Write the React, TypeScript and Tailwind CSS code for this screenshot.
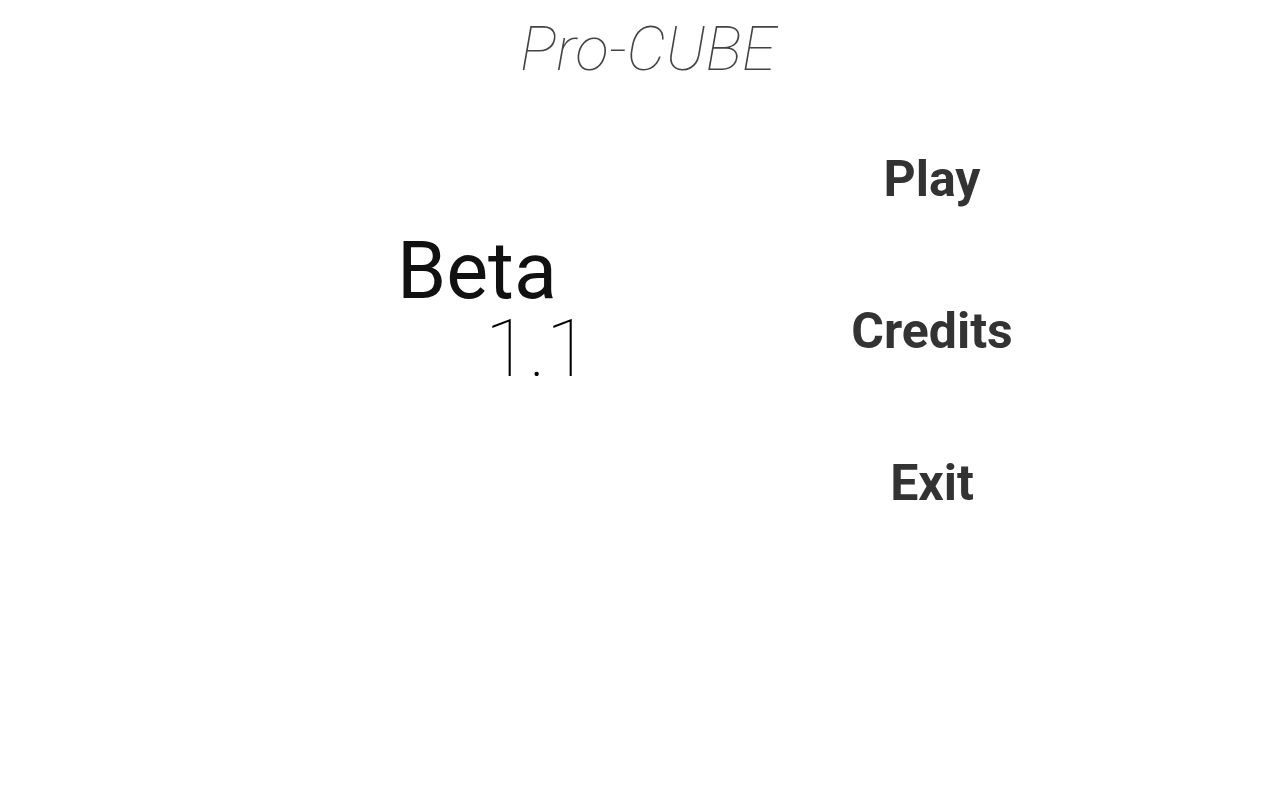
import React from "react";

const menuItems = ["Play", "Credits", "Exit"];

const App: React.FC = () => {
  return (
    <div className="w-full h-screen bg-white font-['Roboto',sans-serif] overflow-hidden">
      <h1 className="pt-[18px] pl-[16px] text-center text-[62px] leading-none font-thin italic text-[#444444]">
        Pro-CUBE
      </h1>

      <div className="flex">
        <div className="w-[760px] pl-[397px] pt-[152px]">
          <div className="text-[79px] leading-none font-normal text-[#111111]">Beta</div>
          <div className="-mt-[2px] pl-[88px] text-[80px] leading-none font-thin text-black">1.1</div>
        </div>

        <div className="w-[344px] pt-[74px] flex flex-col items-center gap-[102px]">
          {menuItems.map((item) => (
            <button
              key={item}
              className="text-[50px] leading-none font-bold text-[#333333]"
            >
              {item}
            </button>
          ))}
        </div>
      </div>
    </div>
  );
};

export default App;
